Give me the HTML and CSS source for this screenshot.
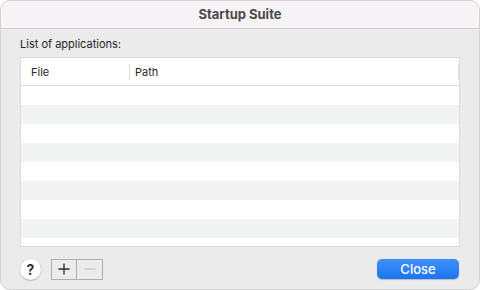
FILE: index.html
```html
<!DOCTYPE html>
<html lang="en">
<head>
    <meta charset="UTF-8">
    <title>Startup Suite</title>
    <link rel="stylesheet" href="styles.css">
</head>
<body>
    <div class="window">
        <div class="titlebar">Startup Suite</div>
        <div class="content">
            <div class="label">List of applications:</div>
            <div class="app-table">
                <div class="app-head">
                    <div class="col-file">File</div>
                    <div class="col-sep"></div>
                    <div class="col-path">Path</div>
                    <div class="col-end"></div>
                </div>
                <div class="app-rows">
                    <div class="row"></div>
                    <div class="row"></div>
                    <div class="row"></div>
                    <div class="row"></div>
                    <div class="row"></div>
                    <div class="row"></div>
                    <div class="row"></div>
                    <div class="row"></div>
                    <div class="row"></div>
                </div>
            </div>
            <div class="footer">
                <button class="help-btn">?</button>
                <div class="segmented">
                    <button class="seg seg-add">
                        <svg width="12" height="12" viewBox="0 0 12 12"><path d="M6 0.5V11.5M0.5 6H11.5" stroke="#2b2b2b" stroke-width="1.3" fill="none"/></svg>
                    </button>
                    <button class="seg seg-remove">
                        <svg width="12" height="12" viewBox="0 0 12 12"><path d="M0.5 6H11.5" stroke="#b9b9b9" stroke-width="1.1" fill="none"/></svg>
                    </button>
                </div>
                <button class="close-btn">Close</button>
            </div>
        </div>
    </div>
</body>
</html>
```

FILE: styles.css
```css
/* Startup Suite dialog */
* { box-sizing: border-box; }
body { margin: 0; background-color: #ffffff; font-family: 'Inter', 'Liberation Sans', sans-serif; }
.window { width: 480px; height: 290px; border: 1px solid #d2d2d2; border-radius: 10px; overflow: hidden; background-color: #ebebeb; display: flex; flex-direction: column; }
.titlebar { height: 28px; background-color: #f6f2f5; border-bottom: 1px solid #d3d0d2; text-align: center; font-size: 13px; font-weight: 700; color: #4b4b4b; line-height: 27px; flex-shrink: 0; }
.content { padding: 8px 19px 0 19px; display: flex; flex-direction: column; }
.label { font-size: 11px; line-height: 14px; color: #262626; }
.app-table { margin-top: 6px; height: 190px; border: 1px solid #dadada; background-color: #ffffff; display: flex; flex-direction: column; }
.app-head { height: 28px; border-bottom: 1px solid #dedede; display: flex; align-items: center; font-size: 11px; color: #262626; flex-shrink: 0; }
.col-file { width: 108px; padding-left: 10px; }
.col-sep { width: 1px; height: 16px; background-color: #dcdcdc; }
.col-path { flex: 1; padding-left: 5px; }
.col-end { width: 1px; height: 16px; background-color: #e4e4e4; }
.app-rows { flex: 1; overflow: hidden; }
.row { height: 19px; }
.row:nth-child(even) { background-color: #f2f4f3; }
.footer { margin-top: 11px; height: 22px; display: flex; align-items: center; }
.help-btn { width: 21px; height: 21px; border-radius: 50%; border: none; padding: 0; background-color: #ffffff; box-shadow: 0 0.5px 1.5px rgba(0,0,0,0.35); font-family: inherit; font-size: 14px; font-weight: 700; color: #2e2e2e; line-height: 21px; }
.segmented { margin-left: 10px; display: flex; border: 1px solid #adadad; height: 21px; }
.seg { width: 25px; height: 19px; border: none; padding: 0; background-color: #ececec; display: flex; align-items: center; justify-content: center; }
.seg-add { border-right: 1px solid #adadad; }
.close-btn { margin-left: auto; margin-right: 1px; width: 82px; height: 20px; border: none; border-radius: 5px; background: linear-gradient(#3f91f9, #1c74f1); color: #ffffff; font-family: inherit; font-size: 13px; font-weight: 500; padding: 0; box-shadow: 0 0.5px 1px rgba(0,0,0,0.2); }
```
